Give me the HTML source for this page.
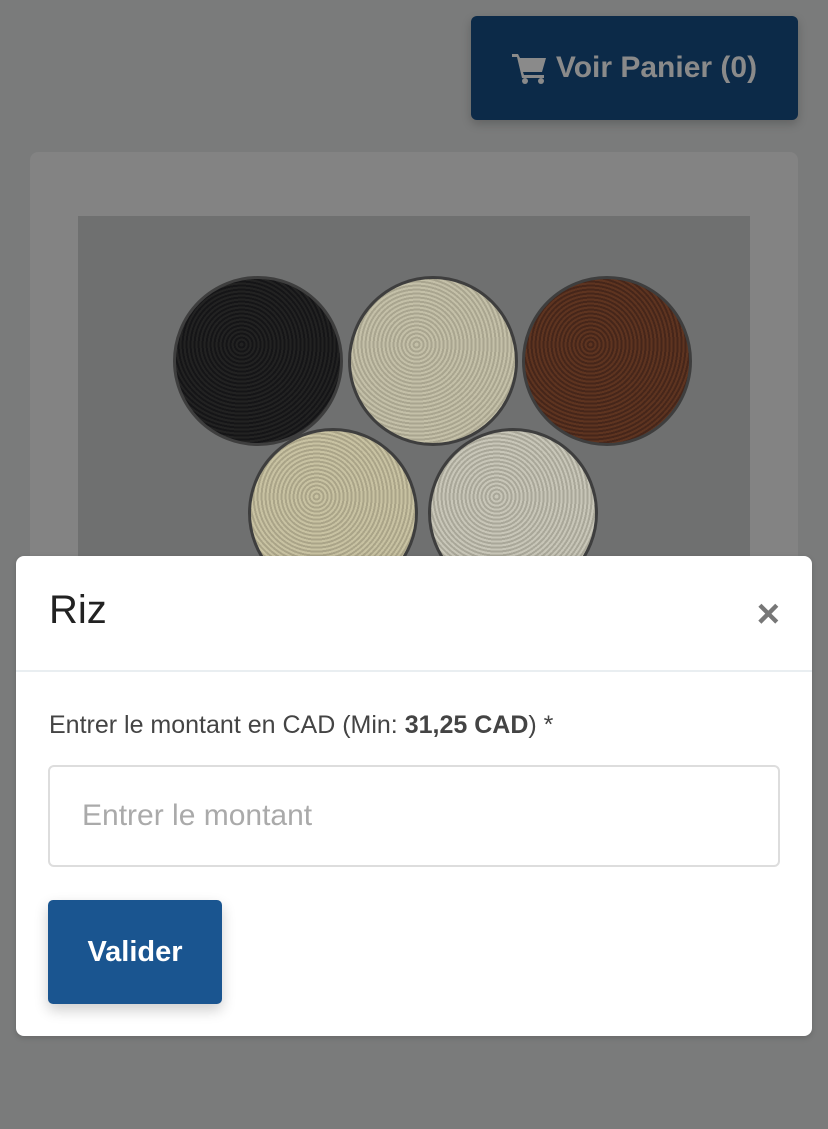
<!DOCTYPE html>
<html><head><meta charset="utf-8"><style>
html,body{margin:0;padding:0;width:828px;height:1129px;overflow:hidden;background:#7a7b7b;font-family:"Liberation Sans",sans-serif;position:relative}
.btn{position:absolute;left:471px;top:16px;width:327px;height:104px;background:#0c2a48;border-radius:6px;color:#8a8a8a;font-weight:bold;font-size:30px;display:flex;align-items:center;justify-content:center;gap:8px;box-shadow:0 4px 10px rgba(0,0,0,.2)}
.card{position:absolute;left:30px;top:152px;width:768px;height:850px;background:#838383;border-radius:8px}
.photo{position:absolute;left:78px;top:216px;width:672px;height:340px;background:#6f7070;overflow:hidden}
.bowl{position:absolute;width:170px;height:170px;border-radius:50%;border:3px solid #3e3e3e;box-sizing:border-box}
.modal{position:absolute;left:16px;top:556px;width:796px;height:480px;background:#fff;border-radius:8px;box-shadow:0 2px 6px rgba(0,0,0,.15)}
.title{position:absolute;left:33px;top:32px;font-size:40px;color:#222}
.close{position:absolute;right:32px;top:36px;font-size:40px;color:#777;font-weight:bold}
.div{position:absolute;left:0;right:0;top:114px;height:2px;background:#e9eef1}
.label{position:absolute;left:33px;top:155px;font-size:25px;color:#444}
.input{position:absolute;left:32px;top:209px;width:732px;height:102px;border:2px solid #ddd;border-radius:6px;box-sizing:border-box;font-size:30px;color:#aaa;padding:32px 0 0 32px}
.val{position:absolute;left:32px;top:344px;width:174px;height:104px;background:#1a5590;border-radius:5px;color:#fff;font-weight:bold;font-size:29px;display:flex;align-items:center;justify-content:center;box-shadow:0 6px 14px rgba(0,0,0,.2)}
</style></head><body>
<div class="btn"><svg width="36" height="32" viewBox="0 0 36 32"><path d="M0 2h6l2 4h26l-4 14H11l1 3h20v3H10L5 5H0z" fill="#8a8a8a"/><circle cx="13" cy="29" r="3" fill="#8a8a8a"/><circle cx="29" cy="29" r="3" fill="#8a8a8a"/></svg>Voir Panier (0)</div>
<div class="card"></div>
<div class="photo">
<div class="bowl" style="left:95px;top:60px;background:repeating-radial-gradient(circle at 40% 40%,#222 0 2px,#151517 2px 4px)"></div>
<div class="bowl" style="left:270px;top:60px;background:repeating-radial-gradient(circle at 40% 40%,#c4c0a8 0 2px,#a9a58f 2px 4px)"></div>
<div class="bowl" style="left:444px;top:60px;background:repeating-radial-gradient(circle at 40% 40%,#5e3420 0 2px,#46261a 2px 4px)"></div>
<div class="bowl" style="left:170px;top:212px;background:repeating-radial-gradient(circle at 40% 40%,#c8c2a2 0 2px,#aaa488 2px 4px)"></div>
<div class="bowl" style="left:350px;top:212px;background:repeating-radial-gradient(circle at 40% 40%,#c8c6b8 0 2px,#a9a799 2px 4px)"></div>
</div>
<div class="modal">
<div class="title">Riz</div><div class="close">×</div>
<div class="div"></div>
<div class="label">Entrer le montant en CAD (Min: <b>31,25 CAD</b>) *</div>
<div class="input">Entrer le montant</div>
<div class="val">Valider</div>
</div>
</body></html>
